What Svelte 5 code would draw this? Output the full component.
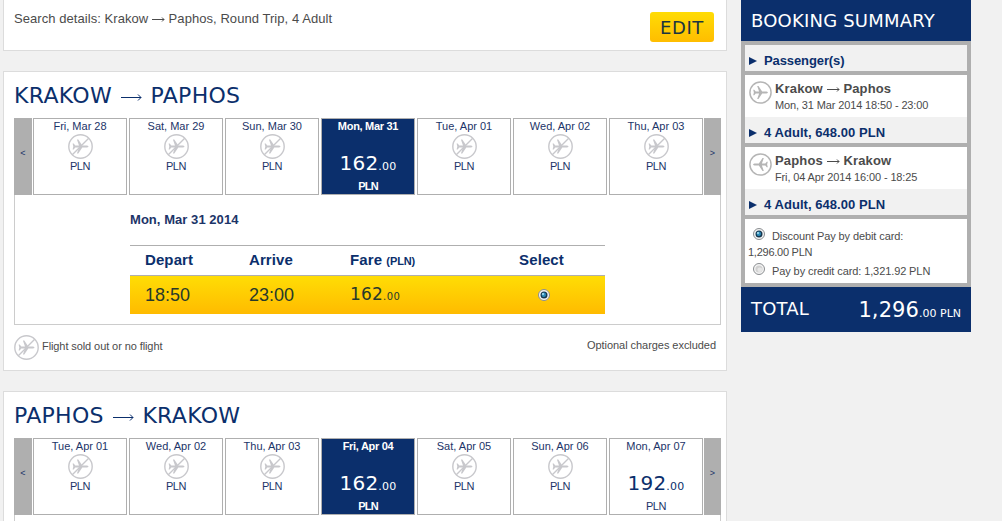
<script lang="ts">
  type Day = { date: string; price?: string; selected?: boolean }

  const outbound: Day[] = [
    { date: 'Fri, Mar 28' },
    { date: 'Sat, Mar 29' },
    { date: 'Sun, Mar 30' },
    { date: 'Mon, Mar 31', price: '162', selected: true },
    { date: 'Tue, Apr 01' },
    { date: 'Wed, Apr 02' },
    { date: 'Thu, Apr 03' },
  ]
  const inbound: Day[] = [
    { date: 'Tue, Apr 01' },
    { date: 'Wed, Apr 02' },
    { date: 'Thu, Apr 03' },
    { date: 'Fri, Apr 04', price: '162', selected: true },
    { date: 'Sat, Apr 05' },
    { date: 'Sun, Apr 06' },
    { date: 'Mon, Apr 07', price: '192' },
  ]
  const legs = [
    { from: 'Krakow', to: 'Paphos', when: 'Mon, 31 Mar 2014 18:50 - 23:00', back: false },
    { from: 'Paphos', to: 'Krakow', when: 'Fri, 04 Apr 2014 16:00 - 18:25', back: true },
  ]

  let payment = $state('debit')
</script>

{#snippet arrow(w: number, head: number)}
  <svg class="arrow" width={w} height="7" viewBox="0 0 {w} 7">
    <path d="M0 3.5H{w - 1}" stroke="currentColor" />
    <path d="M{w - head - 1} {3.5 - head}L{w - 1} 3.5L{w - head - 1} {3.5 + head}" fill="none" stroke="currentColor" />
  </svg>
{/snippet}

{#snippet plane()}
  <path
    d="M20.5 12.5C20.5 11.800 19.300 11.400 18 11.400H14.300L10.300 5.500H8.900L11 11.400H7.300L5.700 9.500H4.600L5.300 12.500L4.600 15.500H5.700L7.300 13.600H11L8.900 19.500H10.300L14.300 13.600H18C19.300 13.600 20.500 13.200 20.500 12.500Z"
    fill="currentColor"
  />
{/snippet}

{#snippet noFlight()}
  <svg class="no-flight" width="25" height="25" viewBox="0 0 25 25">
    <circle cx="12.5" cy="12.5" r="11.7" fill="none" stroke="currentColor" stroke-width="1.4" />
    {@render plane()}
    <path d="M4.3 20.7L20.7 4.3" stroke="currentColor" stroke-width="1.3" />
  </svg>
{/snippet}

{#snippet radio(checked: boolean)}
  <svg class="radio" width="12" height="12" viewBox="0 0 12 12">
    <circle cx="6" cy="6" r="5.5" fill="#f4f4f4" stroke="#8a8d90" />
    {#if checked}
      <circle cx="6" cy="6" r="3.5" fill="#17374f" />
      <circle cx="5.8" cy="5.8" r="2.2" fill="#2f8fbd" />
      <circle cx="5" cy="5" r="1" fill="#b5e4f5" />
    {:else}
      <circle cx="6" cy="6" r="3.6" fill="#d0d0d0" />
      <circle cx="6.8" cy="6.8" r="2.4" fill="#e6e6e6" />
    {/if}
  </svg>
{/snippet}

{#snippet calendar(days: Day[])}
  <div class="calendar">
    <button class="nav prev">&lt;</button>
    {#each days as day}
      <div class="day" class:selected={day.selected}>
        <span class="date">{day.date}</span>
        {#if day.price}
          <span class="price">{day.price}<small>.00</small></span>
        {:else}
          {@render noFlight()}
        {/if}
        <span class="currency">PLN</span>
      </div>
    {/each}
    <button class="nav next">&gt;</button>
  </div>
{/snippet}

<div class="page">
  <main>
    <section class="panel search">
      <p>Search details: Krakow {@render arrow(13, 2)} Paphos, Round Trip, 4 Adult</p>
      <button class="edit">EDIT</button>
    </section>

    <section class="panel flight">
      <h2>KRAKOW {@render arrow(21, 3)} PAPHOS</h2>
      {@render calendar(outbound)}
      <div class="details">
        <h3>Mon, Mar 31 2014</h3>
        <div class="table">
          <div class="row head">
            <span>Depart</span><span>Arrive</span><span>Fare <small>(PLN)</small></span><span class="pick">Select</span>
          </div>
          <div class="row fare">
            <span>18:50</span><span>23:00</span><span class="amount">162<small>.00</small></span>
            <span class="pick">{@render radio(true)}</span>
          </div>
        </div>
      </div>
      <div class="legend">
        {@render noFlight()}
        <span class="sold">Flight sold out or no flight</span>
        <span class="extra">Optional charges excluded</span>
      </div>
    </section>

    <section class="panel flight">
      <h2>PAPHOS {@render arrow(21, 3)} KRAKOW</h2>
      {@render calendar(inbound)}
      <div class="details"></div>
    </section>
  </main>

  <aside>
    <h1>BOOKING SUMMARY</h1>
    <div class="boxes">
      <div class="toggle passengers"><i></i><span>Passenger(s)</span></div>
      {#each legs as leg}
        <div class="leg">
          <div class="route">
            <svg class:back={leg.back} width="23" height="23" viewBox="0 0 25 25">
              <circle cx="12.5" cy="12.5" r="11.5" fill="none" stroke="currentColor" stroke-width="1.6" />
              {@render plane()}
            </svg>
            <div>
              <strong>{leg.from} {@render arrow(13, 2)} {leg.to}</strong>
              <span class="when">{leg.when}</span>
            </div>
          </div>
          <div class="toggle"><i></i><span>4 Adult, 648.00 PLN</span></div>
        </div>
      {/each}
      <div class="payment">
        <button onclick={() => (payment = 'debit')}>{@render radio(payment === 'debit')}<span>Discount Pay by debit card:</span></button>
        <span class="debit">1,296.00 PLN</span>
        <button onclick={() => (payment = 'credit')}>{@render radio(payment === 'credit')}<span>Pay by credit card: 1,321.92 PLN</span></button>
      </div>
    </div>
    <div class="total">
      <span>TOTAL</span>
      <span class="sum">1,296<small>.00 PLN</small></span>
    </div>
  </aside>
</div>

<style>
  :global(body) {
    background: #f1f1f1;
    overflow: hidden;
  }
  .page {
    display: flex;
    align-items: flex-start;
    gap: 14px;
    height: 521px;
    padding-left: 3px;
    overflow: hidden;
    font: 11px/16px Arial, 'Liberation Sans', sans-serif;
    color: #4b4b4b;
  }
  .page * {
    box-sizing: border-box;
  }
  h1, h2, h3, p {
    margin: 0;
    font-weight: normal;
  }
  button {
    border: 0;
    padding: 0;
    background: none;
    color: inherit;
    font: inherit;
    letter-spacing: inherit;
    cursor: pointer;
  }
  svg {
    flex-shrink: 0;
  }
  .arrow {
    display: inline-block;
    vertical-align: 0;
  }
  main {
    display: flex;
    flex-direction: column;
    gap: 20px;
    width: 724px;
  }
  .panel {
    border: 1px solid #dcdcdc;
    background: #fff;
    padding: 0 5px 0 10px;
  }
  .search {
    display: flex;
    justify-content: space-between;
    height: 51px;
    border-top: 0;
    padding: 0 12px 0 10px;
  }
  .search p {
    padding-top: 11px;
    font-size: 13px;
    letter-spacing: 0.06px;
  }
  .edit {
    width: 64px;
    height: 30px;
    margin-top: 12px;
    border-radius: 3px;
    background: linear-gradient(#ffdc05, #ffbd00);
    color: #1b3540;
    font: 18px/31px Verdana, 'DejaVu Sans', sans-serif;
    letter-spacing: 0.6px;
  }
  .flight {
    height: 300px;
  }
  h2 {
    height: 46px;
    padding-top: 8px;
    color: #0b2f6c;
    font: 22px/32px Verdana, 'DejaVu Sans', sans-serif;
    letter-spacing: 0.3px;
    word-spacing: 1.5px;
  }
  h2 .arrow {
    vertical-align: 2px;
  }
  .calendar {
    display: flex;
    gap: 2px;
    width: 707px;
    height: 77px;
    color: #1c3468;
  }
  .nav {
    background: #afafaf;
    font-size: 9px;
    padding-bottom: 8px;
  }
  .prev {
    width: 18px;
    margin-right: -1px;
  }
  .next {
    width: 17px;
    margin-left: -1px;
  }
  .day {
    display: flex;
    flex-direction: column;
    align-items: center;
    width: 94px;
    border: 1px solid #afafaf;
  }
  .date {
    height: 15px;
    line-height: 15px;
  }
  .currency {
    line-height: 15px;
    letter-spacing: -0.4px;
  }
  .no-flight {
    color: #c8c8cc;
  }
  .price {
    height: 45px;
    padding-top: 14px;
    color: #0b2f6c;
    font: 20px/30px Verdana, 'DejaVu Sans', sans-serif;
    letter-spacing: 0.2px;
  }
  .price small {
    font-size: 11px;
  }
  .selected {
    background: #0b2f6c;
    color: #fff;
  }
  .selected .price {
    color: #fff;
  }
  .selected .date {
    font-weight: bold;
    letter-spacing: -0.3px;
  }
  .selected .currency {
    font-weight: bold;
    letter-spacing: -0.8px;
  }
  .details {
    width: 707px;
    height: 130px;
    border: 1px solid #ccc;
    border-top: 0;
    padding: 17px 115px 0;
  }
  h3 {
    height: 33px;
    color: #1c3468;
    font-weight: bold;
    font-size: 13px;
    letter-spacing: 0.05px;
  }
  .table {
    border-top: 1px solid #afafaf;
    color: #0b2f6c;
  }
  .row {
    display: grid;
    grid-template-columns: 104px 101px 141px 106px;
    padding-left: 15px;
  }
  .head {
    height: 30px;
    border-bottom: 1px solid #afafaf;
    font-size: 15px;
    line-height: 28px;
    font-weight: bold;
    letter-spacing: 0.1px;
  }
  .head small {
    font-size: 11px;
    letter-spacing: -0.1px;
  }
  .pick {
    display: flex;
    justify-content: center;
    align-items: center;
  }
  .head .pick {
    align-items: flex-start;
    padding-right: 5px;
  }
  .fare {
    height: 38px;
    background: linear-gradient(#ffdd05, #ffbb00);
    color: #27392b;
    font-size: 18px;
    line-height: 38px;
  }
  .fare .pick {
    padding-bottom: 2px;
  }
  .amount {
    font-family: Verdana, 'DejaVu Sans', sans-serif;
    font-size: 17px;
    line-height: 36px;
    letter-spacing: 0.2px;
  }
  .amount small {
    font-size: 10px;
    letter-spacing: 0.4px;
  }
  .legend {
    display: flex;
    padding: 10px 0 0;
    width: 702px;
  }
  .sold {
    padding: 3px 0 0 3px;
    letter-spacing: -0.09px;
  }
  .extra {
    margin-left: auto;
    padding-top: 2px;
    letter-spacing: -0.05px;
  }
  aside {
    width: 230px;
  }
  h1 {
    height: 41px;
    padding-left: 10px;
    background: #0b2f6c;
    color: #fff;
    font: 18px/41px Verdana, 'DejaVu Sans', sans-serif;
    letter-spacing: 0.2px;
  }
  .boxes {
    display: flex;
    flex-direction: column;
    gap: 4px;
    padding: 4px;
    background: #afafaf;
  }
  .toggle {
    display: flex;
    align-items: center;
    gap: 7px;
    height: 26px;
    padding: 5px 0 0 4px;
    background: #f1f1f1;
    color: #0b2f6c;
    font-size: 13px;
    font-weight: bold;
    letter-spacing: 0.05px;
  }
  .passengers {
    letter-spacing: -0.1px;
  }
  .toggle i {
    width: 0;
    border: 4px solid transparent;
    border-left: 8px solid #0b2f6c;
    border-right: 0;
  }
  .leg {
    background: #fff;
  }
  .route {
    display: flex;
    gap: 3px;
    height: 42px;
    padding: 6px 0 0 4px;
  }
  .route > svg {
    color: #b5b5b5;
  }
  .back {
    transform: scaleX(-1);
  }
  .route strong {
    display: block;
    font-size: 13px;
    line-height: 16px;
    letter-spacing: 0.15px;
  }
  .when {
    display: block;
    letter-spacing: -0.13px;
  }
  .payment {
    display: flex;
    flex-direction: column;
    height: 64px;
    padding: 9px 0 0 3px;
    background: #fff;
    align-items: flex-start;
    letter-spacing: -0.1px;
  }
  .payment button {
    display: flex;
    gap: 7px;
    height: 16px;
    padding-left: 5px;
    text-align: left;
  }
  .payment .debit {
    height: 19px;
    line-height: 17px;
    letter-spacing: -0.25px;
  }
  .total {
    display: flex;
    justify-content: space-between;
    height: 45px;
    padding: 0 10px;
    background: #0b2f6c;
    color: #fff;
    font: 18px/44px Verdana, 'DejaVu Sans', sans-serif;
    letter-spacing: 0.2px;
  }
  .sum {
    font-size: 21px;
    line-height: 46px;
    letter-spacing: 0.1px;
  }
  .sum small {
    font-size: 11px;
    letter-spacing: 0;
  }
</style>
